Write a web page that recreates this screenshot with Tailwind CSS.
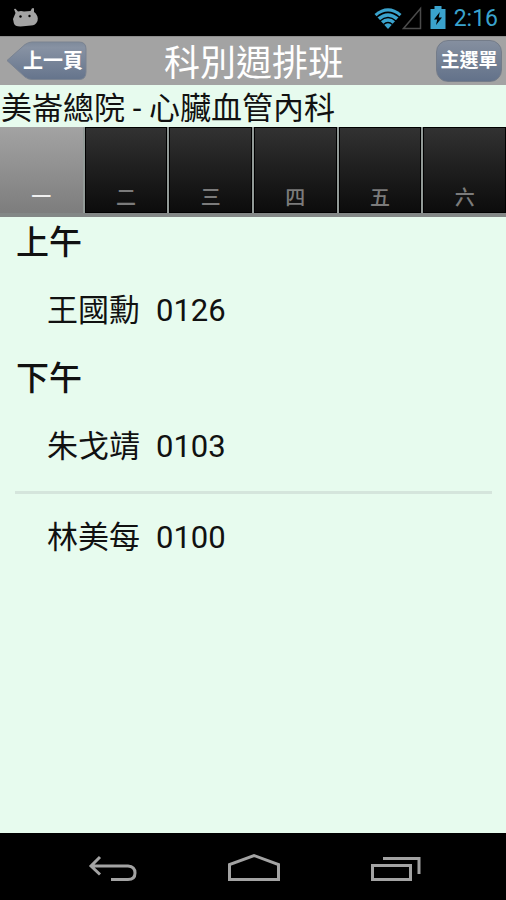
<!DOCTYPE html>
<html lang="zh-Hant">
<head>
<meta charset="utf-8">
<meta name="viewport" content="width=device-width, initial-scale=1">
<title>科別週排班</title>
<script src="https://cdn.jsdelivr.net/npm/@tailwindcss/browser@4"></script>
</head>
<body class="flex min-h-screen flex-col bg-[#e7fbee] font-[Roboto,'Noto_Sans_CJK_TC',sans-serif] text-[#111]">
  <div class="flex h-9 shrink-0 items-center justify-between bg-black pr-2 pl-3">
    <svg class="h-5 w-7" viewBox="0 0 28 20" fill="#a3a3a3" aria-hidden="true">
      <path d="M2 1 L3.500 .8 L6 3.500 Q9 2.500 12 3.500 L18.500 3 L20 .3 L22 .3 L22 4 Q25.500 6.500 25.800 10.500 L25.500 13 Q23.500 17.500 19 17.500 L8.500 18.500 Q2.500 18.500 1.800 15 L1 11 L3.500 5 Z"/>
      <circle cx="8.500" cy="8.500" r="1.200" fill="#000"/><circle cx="17.500" cy="8" r="1.200" fill="#000"/>
    </svg>
    <div class="flex items-center">
      <svg class="h-6 w-7" viewBox="0 0 28 24" aria-hidden="true">
        <path d="M14 23 L0.500 8 Q14 -3.500 27.500 8 Z" fill="#3aa3cd"/>
        <g fill="none" stroke="#000" stroke-width="1.500"><path d="M2.500 11.300 Q14 1.500 25.500 11.300"/><path d="M6 15 Q14 8 22 15"/><path d="M9.500 18.500 Q14 14.500 18.500 18.500"/></g>
      </svg>
      <svg class="h-6 w-5" viewBox="0 0 20 24" fill="none" stroke="#4b4b4b" stroke-width="1.500" aria-hidden="true"><path d="M1.500 22.500 H18.500 V2.500 Z"/></svg>
      <svg class="mr-2 ml-2 h-6 w-4" viewBox="0 0 16 24" aria-hidden="true">
        <path d="M4.500 0 H11.500 V3 H15.500 V23 H.5 V3 H4.500 Z" fill="#3aa3cd"/>
        <path d="M9.800 6 L4 13.500 H7.200 L6 19 L12 11.500 H8.700 Z" fill="#000"/>
      </svg>
      <time class="pt-0.5 text-[23px] leading-9 text-[#3aa3cd]">2:16</time>
    </div>
  </div>

  <header class="grid h-[49px] shrink-0 grid-cols-[1fr_auto_1fr] items-center border-t border-[#8c8c8c] bg-[#a3a3a3] pr-1 pl-1.5 text-white">
    <button type="button" class="relative h-10 w-[82px] justify-self-start text-[20px] leading-10 font-bold">
      <svg class="absolute inset-0 h-full w-full" viewBox="0 0 82 40" aria-hidden="true">
        <defs><linearGradient id="back" x1="0" y1="0" x2="0" y2="1"><stop offset="0" stop-color="#7e8a9b"/><stop offset=".15" stop-color="#8792a3"/><stop offset="1" stop-color="#65748c"/></linearGradient></defs>
        <path d="M1 19.500 L19 3.500 Q22.500 1 26 1 H73 Q80 1 80 8 V31 Q80 38.500 73 38.500 H26 Q22.500 38.500 19 36 Z" fill="url(#back)" stroke="#7a8391"/>
      </svg>
      <span class="relative block pl-3">上一頁</span>
    </button>
    <h1 class="pt-1.5 text-[36px] leading-[42px]">科別週排班</h1>
    <button type="button" class="h-[42px] w-[66px] justify-self-end rounded-xl border border-[#747c89] bg-linear-to-b from-[#858f9f] to-[#63728a] text-[19px] leading-10 font-bold whitespace-nowrap">主選單</button>
  </header>

  <h2 class="h-[42px] shrink-0 pt-0.5 pl-px text-[31px] leading-[44px]">美崙總院 - 心臟血管內科</h2>

  <nav class="grid h-[90px] shrink-0 grid-cols-6 gap-0.5 border-b-4 border-[#838786] bg-[#929a97] text-[20px] leading-5 font-medium text-[#7b7b7b]" aria-label="星期">
    <button type="button" aria-current="true" class="flex items-end justify-center bg-linear-to-b from-[#a3a3a3] to-[#7d7d7d] pb-1.5 text-[#f0f0f0]">一</button>
    <button type="button" class="flex items-end justify-center border border-black bg-linear-to-b from-[#323232] to-[#0c0c0c] pb-1">二</button>
    <button type="button" class="flex items-end justify-center border border-black bg-linear-to-b from-[#323232] to-[#0c0c0c] pb-1">三</button>
    <button type="button" class="flex items-end justify-center border border-black bg-linear-to-b from-[#323232] to-[#0c0c0c] pb-1">四</button>
    <button type="button" class="flex items-end justify-center border border-black bg-linear-to-b from-[#323232] to-[#0c0c0c] pb-1">五</button>
    <button type="button" class="flex items-end justify-center border border-black bg-linear-to-b from-[#323232] to-[#0c0c0c] pb-1">六</button>
  </nav>

  <main class="grow pt-0.5 pr-3.5 pl-[15px]">
    <section>
      <h3 class="pl-px text-[33px] leading-[48px] font-medium">上午</h3>
      <ul class="text-[31px] leading-[88px]">
        <li class="flex gap-4 pl-8"><span>王國勳</span><span>0126</span></li>
      </ul>
    </section>
    <section>
      <h3 class="pl-px text-[33px] leading-[48px] font-medium">下午</h3>
      <ul class="divide-y-3 divide-[#d5e5dc] text-[31px] leading-[88px]">
        <li class="flex gap-4 pl-8"><span>朱戈靖</span><span>0103</span></li>
        <li class="flex gap-4 pl-8"><span>林美每</span><span>0100</span></li>
      </ul>
    </section>
  </main>

  <footer class="flex h-[67px] shrink-0 items-center justify-center gap-[86px] bg-black pt-1 text-[#a3a3a3]">
    <button type="button" aria-label="返回"><svg class="h-8 w-14" viewBox="0 0 56 32" fill="none" stroke="currentColor" stroke-width="3"><path d="M17 4 L8 13 L17 21.500 M8 13 H45 Q52 13.500 52 20 Q52 26.500 45 26.500 H28"/></svg></button>
    <button type="button" aria-label="首頁"><svg class="h-8 w-14" viewBox="0 0 56 32" fill="none" stroke="currentColor" stroke-width="3"><path d="M4.500 26.500 V11.500 L29 2.500 L53.500 11.500 V26.500 Z"/></svg></button>
    <button type="button" aria-label="最近使用"><svg class="h-8 w-14" viewBox="0 0 56 32" fill="none" stroke="currentColor" stroke-width="3"><path d="M5.500 12.500 H43.500 V26.500 H5.500 Z M16 5.500 H52 V21"/></svg></button>
  </footer>
</body>
</html>
